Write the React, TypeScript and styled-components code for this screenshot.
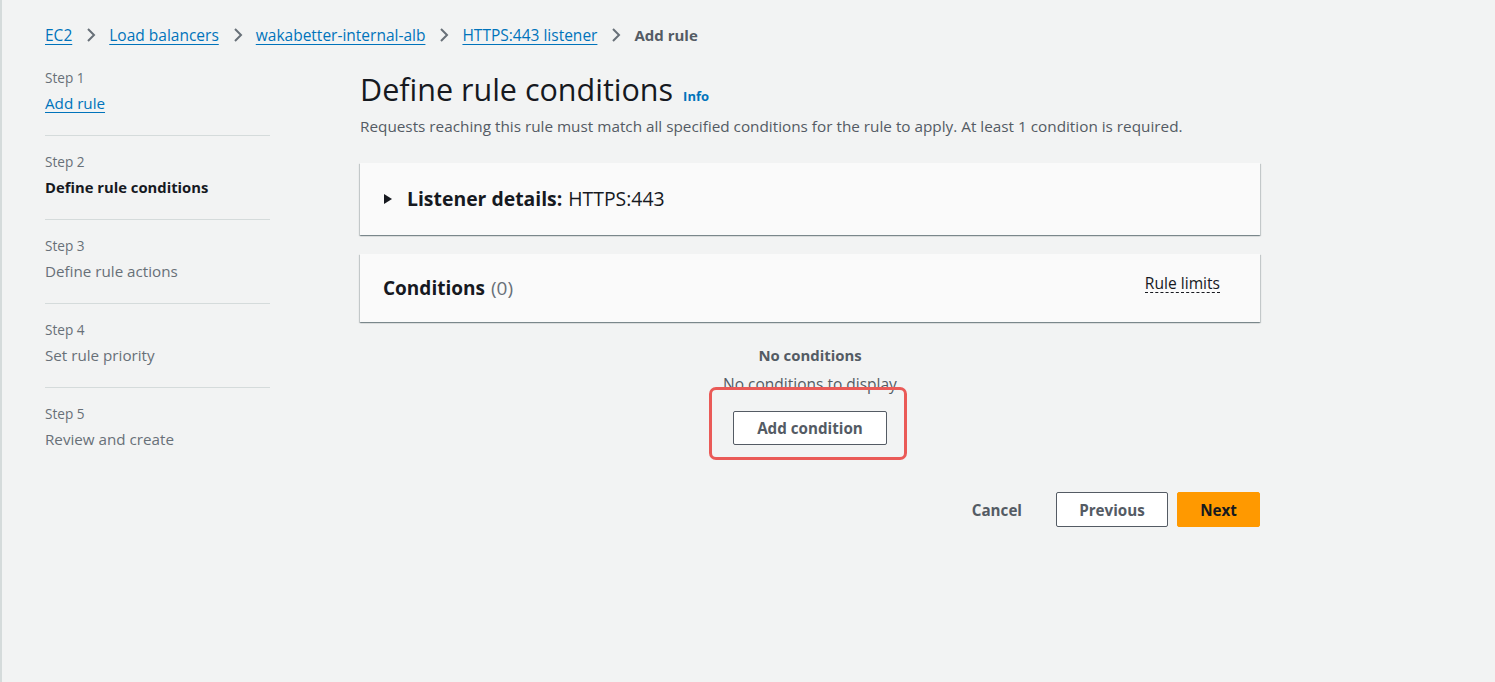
import React from "react";
import styled, { createGlobalStyle } from "styled-components";

const Global = createGlobalStyle`
  html, body { margin: 0; padding: 0; background: #f2f3f3; }
  body { font-family: "Open Sans", "Liberation Sans", Arial, sans-serif; color: #16191f; -webkit-font-smoothing: antialiased; }
  * { box-sizing: border-box; }
`;

const Page = styled.div`
  min-height: 682px;
  border-left: 2px solid #d5dbdb;
  padding: 25px 0 0 43px;
`;

const Crumbs = styled.nav`
  display: flex;
  align-items: center;
  height: 20px;
  font-size: 15.5px;
  line-height: 20px;
`;

const CrumbLink = styled.a`
  color: #0073bb;
  text-decoration: underline;
  text-underline-offset: 3px;
  cursor: pointer;
`;

const CrumbCurrent = styled.span`
  color: #545b64;
  font-weight: 700;
  font-size: 15px;
`;

const Chevron = styled.svg`
  width: 16px;
  height: 16px;
  margin: 0 10px 0 11px;
  flex: none;
`;

const Layout = styled.div`
  display: grid;
  grid-template-columns: 225px 900px;
  column-gap: 90px;
  margin-top: 24px;
`;

const Steps = styled.ol`
  list-style: none;
  margin: 0;
  padding: 0;
`;

const Step = styled.li`
  padding: 17px 0 22px;
  border-bottom: 1px solid #d5dbdb;
  &:first-child { padding-top: 0; }
  &:last-child { border-bottom: none; }
`;

const StepLabel = styled.div`
  font-size: 13.6px;
  line-height: 18px;
  color: #687078;
`;

const StepTitle = styled.div<{ $state: "link" | "active" | "idle" }>`
  margin-top: 6px;
  font-size: ${(p) => (p.$state === "active" ? "14.8px" : "15.2px")};
  line-height: 20px;
  color: ${(p) => (p.$state === "link" ? "#0073bb" : p.$state === "active" ? "#16191f" : "#687078")};
  font-weight: ${(p) => (p.$state === "active" ? 700 : 400)};
  text-decoration: ${(p) => (p.$state === "link" ? "underline" : "none")};
  text-underline-offset: 3px;
`;

const Main = styled.main`
  padding-top: 2px;
  display: flex;
  flex-direction: column;
`;

const TitleRow = styled.div`
  display: flex;
  align-items: baseline;
  gap: 10px;
`;

const Title = styled.h1`
  margin: 0;
  font-size: 30.5px;
  line-height: 36px;
  font-weight: 400;
  color: #16191f;
`;

const InfoLink = styled.a`
  font-size: 13px;
  font-weight: 700;
  color: #0073bb;
`;

const Description = styled.p`
  margin: 9px 0 0;
  font-size: 15.3px;
  line-height: 20px;
  color: #545b64;
`;

const Card = styled.section<{ $h: number }>`
  background: #fafafa;
  height: ${(p) => p.$h}px;
  display: flex;
  align-items: center;
  justify-content: space-between;
  padding: 0 40px 0 23px;
  box-shadow: 0 1px 1px 0 rgba(0, 28, 36, 0.3), 1px 1px 1px 0 rgba(0, 28, 36, 0.15), -1px 1px 1px 0 rgba(0, 28, 36, 0.15);
`;

const CardStack = styled.div`
  margin-top: 27px;
  display: flex;
  flex-direction: column;
  gap: 19px;
`;

const CardHeading = styled.h2<{ $size?: number }>`
  margin: 0;
  font-size: ${(p) => p.$size ?? 19}px;
  line-height: 22px;
  font-weight: 700;
  color: #16191f;
  display: flex;
  align-items: center;
`;

const Light = styled.span<{ $muted?: boolean }>`
  font-weight: 400;
  margin-left: 6px;
  color: ${(p) => (p.$muted ? "#687078" : "#16191f")};
`;

const Caret = styled.svg`
  width: 10px;
  height: 12px;
  margin-right: 14px;
`;

const Dotted = styled.span`
  font-size: 15.6px;
  line-height: 18px;
  color: #16191f;
  border-bottom: 1px dashed #16191f;
  margin-bottom: 10px;
`;

const Empty = styled.div`
  display: flex;
  flex-direction: column;
  align-items: center;
  margin-top: 23px;
`;

const EmptyTitle = styled.div`
  font-size: 14.9px;
  line-height: 20px;
  font-weight: 700;
  color: #545b64;
`;

const EmptyText = styled.div`
  font-size: 15.5px;
  line-height: 20px;
  margin-top: 9px;
  color: #545b64;
`;

const Highlight = styled.div`
  position: relative;
  margin-top: 17px;
  width: 154px;
`;

const Annotation = styled.span`
  position: absolute;
  left: -24px;
  top: -24px;
  right: -20px;
  bottom: -15px;
  border: 3px solid #ea5a57;
  border-radius: 7px;
  pointer-events: none;
`;

const Button = styled.button<{ $variant?: "primary" | "normal" | "link"; $w?: number; $h?: number }>`
  height: ${(p) => p.$h ?? 34}px;
  min-width: ${(p) => p.$w ?? 0}px;
  padding: 0 20px;
  margin-right: ${(p) => (p.$variant === "link" ? 4 : 0)}px;
  font-family: inherit;
  font-size: 15.2px;
  font-weight: 700;
  border-radius: 2px;
  cursor: pointer;
  border: 1px solid ${(p) => (p.$variant === "primary" ? "#ff9900" : p.$variant === "link" ? "transparent" : "#545b64")};
  background: ${(p) => (p.$variant === "primary" ? "#ff9900" : p.$variant === "link" ? "transparent" : "#ffffff")};
  color: ${(p) => (p.$variant === "primary" ? "#16191f" : "#545b64")};
`;

const Footer = styled.div`
  margin-top: 47px;
  display: flex;
  justify-content: flex-end;
  align-items: center;
  gap: 9px;
`;

const ChevronIcon = () => (
  <Chevron viewBox="0 0 16 16" fill="none">
    <path d="M5 2l6 6-6 6" stroke="#687078" strokeWidth="2" strokeLinejoin="miter" />
  </Chevron>
);

const steps = [
  { n: 1, title: "Add rule", state: "link" as const },
  { n: 2, title: "Define rule conditions", state: "active" as const },
  { n: 3, title: "Define rule actions", state: "idle" as const },
  { n: 4, title: "Set rule priority", state: "idle" as const },
  { n: 5, title: "Review and create", state: "idle" as const },
];

export default function App() {
  return (
    <>
      <Global />
      <Page>
        <Crumbs>
          <CrumbLink>EC2</CrumbLink>
          <ChevronIcon />
          <CrumbLink>Load balancers</CrumbLink>
          <ChevronIcon />
          <CrumbLink>wakabetter-internal-alb</CrumbLink>
          <ChevronIcon />
          <CrumbLink>HTTPS:443 listener</CrumbLink>
          <ChevronIcon />
          <CrumbCurrent>Add rule</CrumbCurrent>
        </Crumbs>
        <Layout>
          <Steps>
            {steps.map((s) => (
              <Step key={s.n}>
                <StepLabel>Step {s.n}</StepLabel>
                <StepTitle $state={s.state}>{s.title}</StepTitle>
              </Step>
            ))}
          </Steps>
          <Main>
            <TitleRow>
              <Title>Define rule conditions</Title>
              <InfoLink>Info</InfoLink>
            </TitleRow>
            <Description>
              Requests reaching this rule must match all specified conditions for the rule to apply. At least 1 condition is required.
            </Description>
            <CardStack>
              <Card $h={72}>
                <CardHeading $size={19.4}>
                  <Caret viewBox="0 0 10 12">
                    <path d="M1 1l8 5-8 5z" fill="#16191f" />
                  </Caret>
                  Listener details:<Light>HTTPS:443</Light>
                </CardHeading>
              </Card>
              <Card $h={68}>
                <CardHeading>
                  Conditions<Light $muted>(0)</Light>
                </CardHeading>
                <Dotted>Rule limits</Dotted>
              </Card>
            </CardStack>
            <Empty>
              <EmptyTitle>No conditions</EmptyTitle>
              <EmptyText>No conditions to display</EmptyText>
              <Highlight>
                <Button $w={154}>Add condition</Button>
                <Annotation />
              </Highlight>
            </Empty>
            <Footer>
              <Button $variant="link">Cancel</Button>
              <Button $w={112} $h={35}>Previous</Button>
              <Button $variant="primary" $w={83} $h={35}>Next</Button>
            </Footer>
          </Main>
        </Layout>
      </Page>
    </>
  );
}
